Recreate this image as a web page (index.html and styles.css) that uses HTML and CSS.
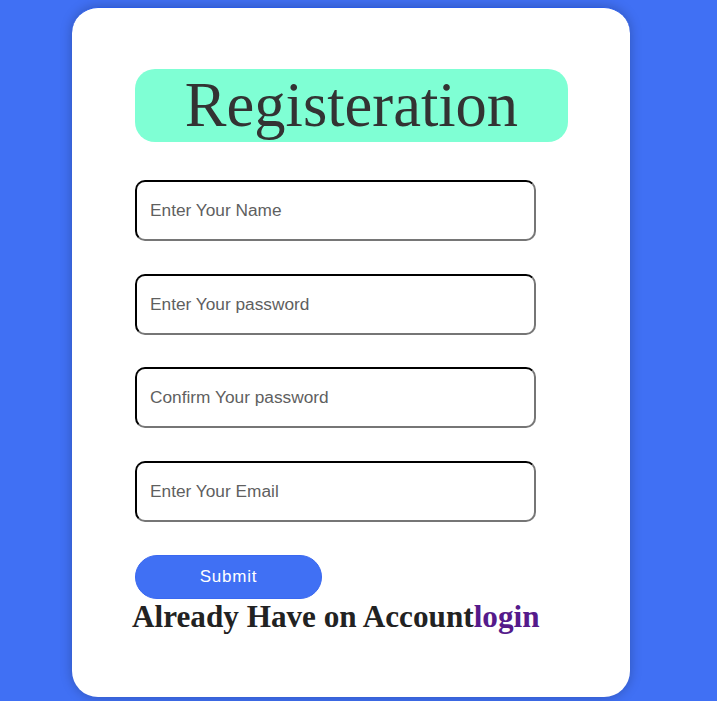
FILE: index.html
```html
<!DOCTYPE html>
<html>
<head>
<meta charset="utf-8">
<link rel="stylesheet" href="styles.css">
</head>
<body>
<div class="card">
  <h1 class="title">Registeration</h1>
  <form class="form">
    <input class="field" type="text" placeholder="Enter Your Name">
    <input class="field" type="password" placeholder="Enter Your password">
    <input class="field" type="password" placeholder="Confirm Your password">
    <input class="field" type="email" placeholder="Enter Your Email">
    <button class="submit" type="button">Submit</button>
  </form>
  <p class="already">Already Have on Account<a class="login" href="#">login</a></p>
</div>
</body>
</html>
```
FILE: styles.css
```css
html, body {
  margin: 0;
  padding: 0;
}
body {
  background: #4070f4;
  padding: 7px 0 0 72px;
  height: 701px;
  box-sizing: border-box;
  overflow: hidden;
}
.card {
  width: 558px;
  height: 690px;
  box-sizing: border-box;
  background: #fff;
  border-radius: 26px;
  border-top: 1px solid #2a5ce8;
  box-shadow: 0 0 12px rgba(0, 0, 0, 0.25);
  padding: 61px 0 0 63px;
}
.title {
  margin: 0;
  width: 433px;
  height: 73px;
  box-sizing: border-box;
  background: #7fffd4;
  border-radius: 20px;
  font-family: "Liberation Serif", serif;
  font-weight: normal;
  font-size: 62.5px;
  line-height: 73px;
  color: #333;
  text-align: center;
}
.form {
  display: flex;
  flex-direction: column;
  align-items: flex-start;
  gap: 32.7px;
  margin-top: 38px;
}
.field {
  width: 401px;
  height: 61px;
  box-sizing: border-box;
  border: 2px inset #767676;
  border-top-color: #1a1a1a;
  border-left-color: #1a1a1a;
  border-radius: 10px;
  padding: 0 13px;
  font-family: "Liberation Sans", Arial, sans-serif;
  font-size: 17.3px;
  color: #333;
  outline: none;
}
.field::placeholder {
  color: #5f5f5f;
}
.submit {
  width: 187px;
  height: 44px;
  border: 1px solid #3a68f0;
  border-radius: 22px;
  background: #4070f4;
  color: #fff;
  font-family: "Liberation Sans", Arial, sans-serif;
  font-size: 17px;
  letter-spacing: 0.8px;
  cursor: pointer;
}
.already {
  margin: 0 0 0 -3px;
  font-family: "Liberation Serif", serif;
  font-weight: bold;
  font-size: 31.2px;
  line-height: 36px;
  color: #222;
}
.login {
  color: #551a8b;
  text-decoration: none;
}
```
